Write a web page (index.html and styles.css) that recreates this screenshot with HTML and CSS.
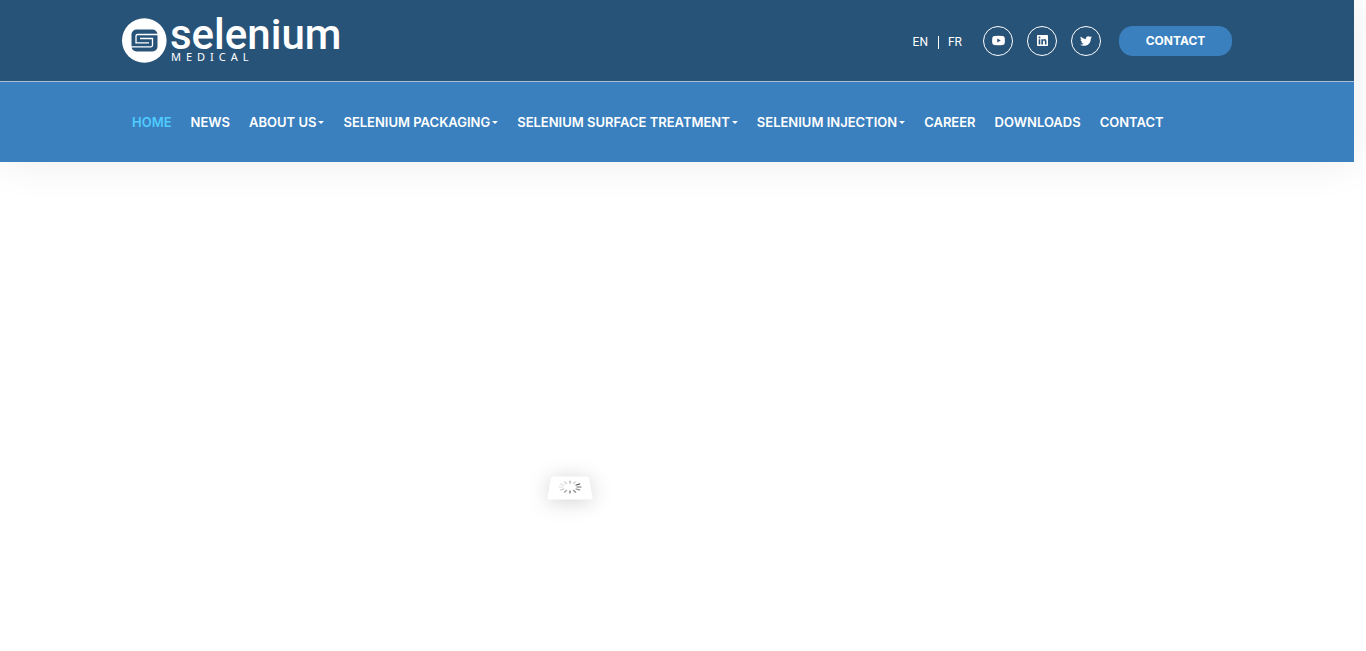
FILE: index.html
```html
<!DOCTYPE html>
<html lang="en">
<head>
<meta charset="utf-8">
<title>Selenium Medical</title>
<link rel="stylesheet" href="styles.css">
</head>
<body>
<header class="header">
  <div class="topbar">
    <div class="container topbar-inner">
      <a class="logo" href="#" aria-label="Selenium Medical">
        <svg width="230" height="46" viewBox="0 0 230 46">
          <circle cx="22.300" cy="22.500" r="22.300" fill="#fff"/>
          <rect x="9.500" y="11.500" width="26" height="22" rx="5" fill="#285379"/>
          <path d="M36 16.500H15.500Q14 16.500 14 18V24.800H27" fill="none" stroke="#fff" stroke-width="1.300"/>
          <path d="M9 28.800H29Q30.500 28.800 30.500 27.300V20.500H18" fill="none" stroke="#fff" stroke-width="1.300"/>
          <text class="logo-name" x="48" y="31">selenium</text>
          <text class="logo-sub" x="49" y="43">MEDICAL</text>
        </svg>
      </a>
      <div class="tools">
        <nav class="langs" aria-label="Language">
          <a href="#">EN</a>
          <a href="#">FR</a>
        </nav>
        <div class="socials">
          <a class="social" href="#" aria-label="YouTube">
            <svg width="13" height="11" viewBox="0 0 26 22"><path fill="#fff" fill-rule="evenodd" d="M5 2Q13 1 21 2q4 0 4.500 4 .5 5 0 10-.5 4-4.500 4-8 1-16 0-4 0-4.500-4Q0 11 .5 6 1 2 5 2zM10.500 7v8l7-4z"/></svg>
          </a>
          <a class="social" href="#" aria-label="LinkedIn">
            <svg width="11" height="11" viewBox="0 0 22 22"><path fill="#fff" fill-rule="evenodd" d="M1.500 0h19q1.500 0 1.500 1.500v19q0 1.500-1.500 1.500h-19Q0 22 0 20.500v-19Q0 0 1.500 0zM3.300 8.300V19h3.300V8.300zM5 3.200a1.900 1.900 0 1 0 0 3.800 1.900 1.900 0 0 0 0-3.800zM8.700 8.300V19H12v-5.300c0-3.500 3.700-3.500 3.700 0V19H19v-6c0-5.500-5.300-6-7-3.300V8.300z"/></svg>
          </a>
          <a class="social" href="#" aria-label="Twitter">
            <svg width="12" height="12" viewBox="0 0 512 512"><path fill="#fff" d="M459.370 151.716c.325 4.548.325 9.097.325 13.645 0 138.720-105.583 298.558-298.558 298.558-59.452 0-114.680-17.219-161.137-47.106 8.447.974 16.568 1.299 25.340 1.299 49.055 0 94.213-16.568 130.274-44.832-46.132-.975-84.792-31.188-98.112-72.772 6.498.974 12.995 1.624 19.818 1.624 9.421 0 18.843-1.300 27.614-3.573-48.081-9.747-84.143-51.980-84.143-102.985v-1.299c13.969 7.797 30.214 12.670 47.431 13.319-28.264-18.843-46.781-51.005-46.781-87.391 0-19.492 5.197-37.360 14.294-52.954 51.655 63.675 129.300 105.258 216.365 109.807-1.624-7.797-2.599-15.918-2.599-24.040 0-57.828 46.782-104.934 104.934-104.934 30.213 0 57.502 12.670 76.670 33.137 23.715-4.548 46.456-13.320 66.599-25.340-7.798 24.366-24.366 44.833-46.132 57.827 21.117-2.273 41.584-8.122 60.426-16.243-14.292 20.791-32.161 39.308-52.628 54.253z"/></svg>
          </a>
        </div>
        <a class="cta" href="#">CONTACT</a>
      </div>
    </div>
  </div>
  <div class="menubar">
    <nav class="container menu" aria-label="Main">
      <a class="active" href="#">HOME</a>
      <a href="#">NEWS</a>
      <a class="drop" href="#">ABOUT US</a>
      <a class="drop" href="#">SELENIUM PACKAGING</a>
      <a class="drop" href="#">SELENIUM SURFACE TREATMENT</a>
      <a class="drop" href="#">SELENIUM INJECTION</a>
      <a href="#">CAREER</a>
      <a href="#">DOWNLOADS</a>
      <a href="#">CONTACT</a>
    </nav>
  </div>
</header>
<main class="stage">
  <svg class="loader" width="146" height="104" viewBox="-50 -40 146 104" role="img" aria-label="Loading">
    <path class="loader-card" d="M6 .5H40Q41.500 .5 42 2L45.500 21.500Q45.800 23.500 44 23.500H2Q.2 23.500 .5 21.500L4 2Q4.500 .5 6 .5z" fill="#fff"/>
    <g transform="translate(23 11) scale(1 .55)" stroke="#222" stroke-width="1.700" stroke-linecap="round">
      <path d="M0-7V-11" opacity=".3"/>
      <path d="M0-7V-11" transform="rotate(30)" opacity=".2"/>
      <path d="M0-7V-11" transform="rotate(60)" opacity=".8"/>
      <path d="M0-7V-11" transform="rotate(90)" opacity=".65"/>
      <path d="M0-7V-11" transform="rotate(120)" opacity=".55"/>
      <path d="M0-7V-11" transform="rotate(150)" opacity=".5"/>
      <path d="M0-7V-11" transform="rotate(180)" opacity=".5"/>
      <path d="M0-7V-11" transform="rotate(210)" opacity=".4"/>
      <path d="M0-7V-11" transform="rotate(240)" opacity=".25"/>
      <path d="M0-7V-11" transform="rotate(270)" opacity=".12"/>
      <path d="M0-7V-11" transform="rotate(300)" opacity=".15"/>
      <path d="M0-7V-11" transform="rotate(330)" opacity=".2"/>
    </g>
  </svg>
</main>
</body>
</html>
```
FILE: styles.css
```css
* { box-sizing: border-box; }
body {
  margin: 0;
  background: #fff;
  font-family: Roboto, sans-serif;
  font-size: 12px;
}
a { color: #fff; text-decoration: none; }
svg { display: block; overflow: visible; }
.header {
  margin-right: 12px;
  box-shadow: 0 0 40px rgba(0, 0, 0, 0.08);
}
.container { max-width: 1110px; margin: 0 auto; }
.topbar {
  background: #285379;
  border-bottom: 1px solid #a9bdd3;
}
.topbar-inner {
  display: flex;
  align-items: center;
  justify-content: space-between;
  height: 81px;
}
.logo-name {
  font: 500 42px Roboto, sans-serif;
  fill: #fff;
}
.logo-sub {
  font: 400 11px "Noto Sans", sans-serif;
  letter-spacing: 5px;
  fill: #fff;
}
.tools { display: flex; align-items: center; }
.langs { display: flex; margin-right: 21px; padding-top: 4px; line-height: 13px; }
.langs a + a {
  margin-left: 10px;
  padding-left: 9px;
  border-left: 1px solid #fff;
}
.socials { display: flex; gap: 14px; margin-right: 18px; }
.social {
  display: flex;
  align-items: center;
  justify-content: center;
  width: 30px;
  height: 30px;
  border: 1px solid #fff;
  border-radius: 50%;
}
.cta {
  width: 113px;
  border-radius: 14px;
  background: #3a80be;
  font: 700 12px/30px Inter, sans-serif;
  text-align: center;
}
.menubar { background: #3a80be; }
.menu {
  display: flex;
  align-items: center;
  gap: 19px;
  height: 80px;
  padding: 0 10px;
  font: 600 13px/20px Inter, sans-serif;
  white-space: nowrap;
}
.menu .active { color: #4fcbff; }
.drop { display: flex; align-items: center; gap: 2px; }
.drop::after {
  content: "";
  border: 3px solid transparent;
  border-top-color: #fff;
  border-bottom: 0;
}
.stage { max-width: 1140px; padding-top: 274px; }
.loader { margin: 0 auto; }
.loader-card { filter: drop-shadow(0 2px 10px rgba(0, 0, 0, 0.18)); }
```
